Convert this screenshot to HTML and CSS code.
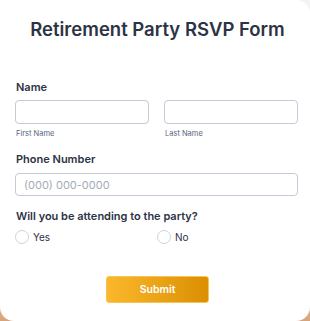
FILE: index.html
```html
<!DOCTYPE html>
<html lang="en">
<head>
  <meta charset="UTF-8" />
  <title>Retirement Party RSVP Form</title>
  <link rel="stylesheet" href="styles.css">
</head>
<body>
  <form class="card">
    <h1>Retirement Party RSVP Form</h1>

    <label class="field-label">Name</label>
    <div class="name-row">
      <div class="name-col">
        <input type="text" class="text-input" />
        <span class="sub-label">First Name</span>
      </div>
      <div class="name-col">
        <input type="text" class="text-input" />
        <span class="sub-label">Last Name</span>
      </div>
    </div>

    <label class="field-label phone-label">Phone Number</label>
    <input type="text" class="text-input phone-input" placeholder="(000) 000-0000" />

    <label class="field-label question-label">Will you be attending to the party?</label>
    <div class="radio-row">
      <label class="radio-opt first"><span class="radio"></span>Yes</label>
      <label class="radio-opt"><span class="radio"></span>No</label>
    </div>

    <div class="submit-wrap">
      <button type="button" class="btn-submit">Submit</button>
    </div>
  </form>
</body>
</html>
```

FILE: styles.css
```css
* {
  margin: 0;
  padding: 0;
  box-sizing: border-box;
}

html, body {
  width: 310px;
  height: 321px;
  overflow: hidden;
}

body {
  font-family: Inter, 'Noto Sans', sans-serif;
  background: linear-gradient(180deg, #f4f4f6 0%, #f1e6dc 70%, #d9a47a 100%);
  color: #2c3345;
}

.card {
  width: 310px;
  height: 321px;
  background: #ffffff;
  border-radius: 14px;
  border-top-left-radius: 0;
  padding: 14px 12px 0 15px;
}

h1 {
  font-size: 18.5px;
  font-weight: 600;
  line-height: 30px;
  text-align: center;
  white-space: nowrap;
  color: #2c3345;
  padding-left: 2px;
}

.field-label {
  display: block;
  font-size: 11px;
  font-weight: 600;
  line-height: 16px;
  color: #2c3345;
  margin-top: 35px;
  padding-left: 1px;
}

.name-row {
  display: grid;
  grid-template-columns: 134px 134px;
  gap: 15px;
  margin-top: 5px;
}

.name-col {
  display: flex;
  flex-direction: column;
}

.text-input {
  display: block;
  width: 100%;
  height: 24px;
  border: 1px solid #c3cad8;
  border-radius: 4px;
  background: #fff;
  font-family: inherit;
  font-size: 11px;
  padding: 0 8px;
  outline: none;
}

.text-input::placeholder {
  color: #a4abb8;
}

.sub-label {
  display: block;
  font-size: 7.5px;
  line-height: 12px;
  margin-top: 4px;
  padding-left: 1px;
  color: #57647e;
}

.phone-label {
  margin-top: 11px;
}

.phone-input {
  margin-top: 6px;
  height: 23px;
}

.question-label {
  margin-top: 12px;
}

.radio-row {
  display: flex;
  margin-top: 5px;
  height: 16px;
}

.radio-opt {
  display: flex;
  align-items: center;
  font-size: 10px;
  color: #2c3345;
}

.radio-opt.first {
  width: 142px;
}

.radio {
  display: inline-block;
  width: 14px;
  height: 14px;
  border: 1px solid #cdd3de;
  border-radius: 50%;
  margin-right: 4px;
}

.submit-wrap {
  display: flex;
  justify-content: center;
  margin-top: 31px;
  padding-left: 2px;
}

.btn-submit {
  width: 103px;
  height: 27px;
  border: 1px solid #f5c453;
  border-radius: 3px;
  background: linear-gradient(90deg, #fbb82d 0%, #db8f02 100%);
  color: #ffffff;
  font-family: inherit;
  font-size: 10.5px;
  font-weight: 600;
  cursor: pointer;
}
```
